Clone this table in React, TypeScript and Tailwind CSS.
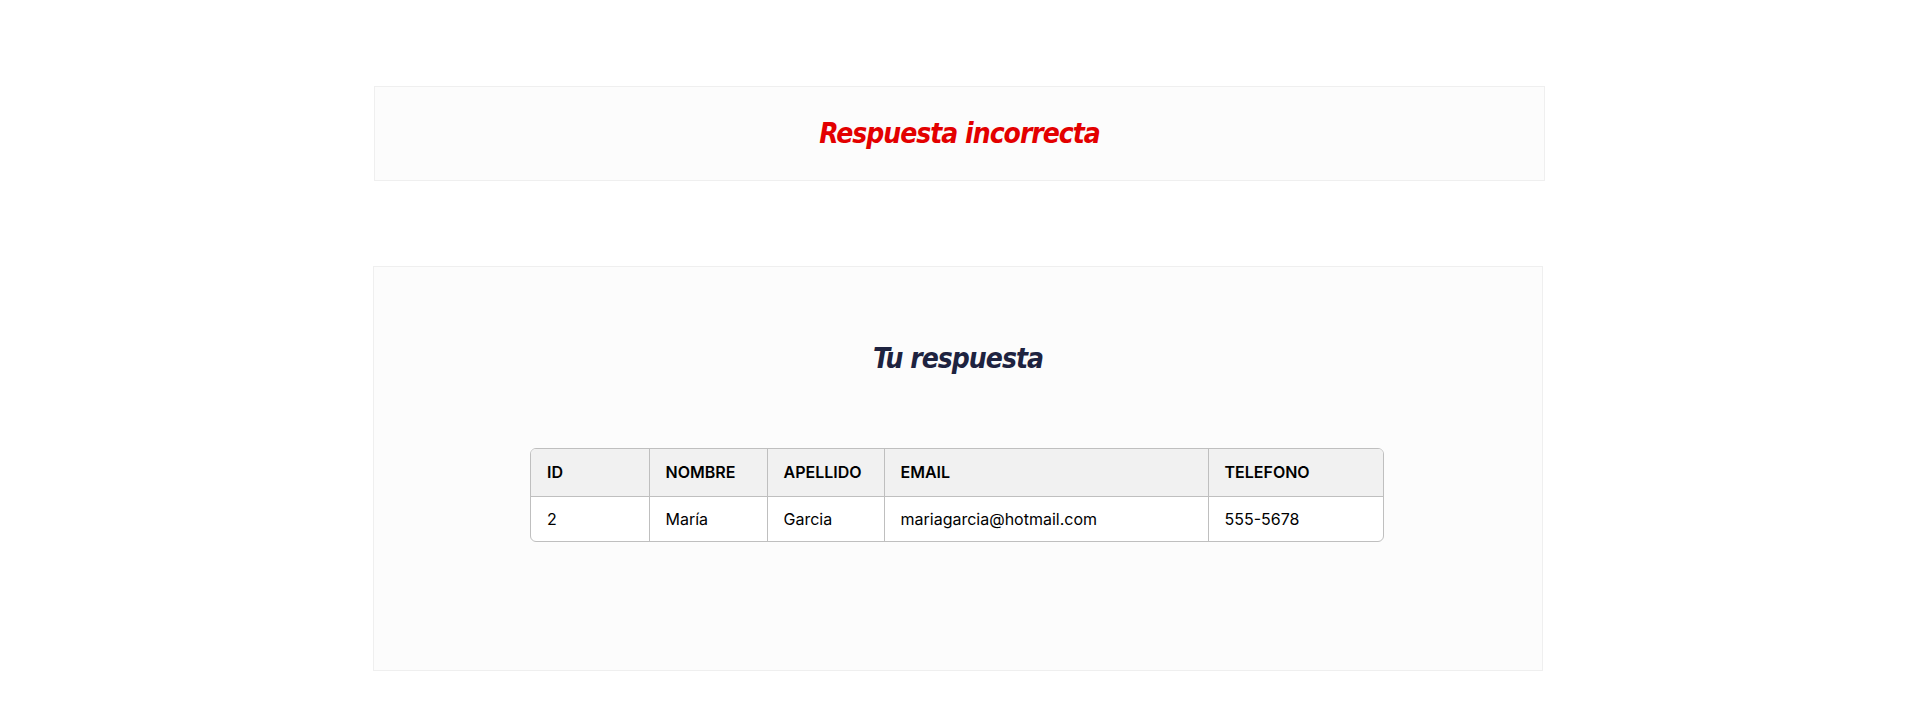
const columns = [
  { key: "id", label: "ID", width: "w-[118px]" },
  { key: "nombre", label: "NOMBRE", width: "w-[118px]" },
  { key: "apellido", label: "APELLIDO", width: "w-[117px]" },
  { key: "email", label: "EMAIL", width: "w-[324px]" },
  { key: "telefono", label: "TELEFONO", width: "" },
] as const

const rows = [
  { id: "2", nombre: "María", apellido: "Garcia", email: "mariagarcia@hotmail.com", telefono: "555-5678" },
]

const headingFont = "font-['DejaVu_Sans_Condensed',sans-serif] italic font-bold text-[28px] leading-9 tracking-[-1px]"

export default function App() {
  return (
    <div className="min-h-[721px] bg-white pt-[86px] font-['Inter',sans-serif]">
      <div className="mx-auto w-[1174px]">
        <div className="ml-px flex h-[95px] w-[1171px] items-center justify-center border border-[#efefef] bg-[#fcfcfc]">
          <h1 className={`${headingFont} text-[#e30000]`}>Respuesta incorrecta</h1>
        </div>

        <div className="mt-[85px] h-[405px] w-[1170px] border border-[#efefef] bg-[#fcfcfc] pt-[74px]">
          <h2 className={`${headingFont} text-center text-[#1e2340]`}>Tu respuesta</h2>

          <div className="mx-auto mt-[71px] w-[854px] -translate-x-px overflow-hidden rounded-md border border-[#bfbfbf] bg-white">
            <table className="w-full table-fixed border-collapse text-left text-base text-black">
              <thead>
                <tr className="bg-[#f1f1f1]">
                  {columns.map((c, i) => (
                    <th
                      key={c.key}
                      className={`${c.width} h-[47px] border-b border-[#bfbfbf] px-4 font-semibold ${i > 0 ? "border-l" : ""}`}
                    >
                      {c.label}
                    </th>
                  ))}
                </tr>
              </thead>
              <tbody>
                {rows.map((r) => (
                  <tr key={r.id}>
                    {columns.map((c, i) => (
                      <td key={c.key} className={`h-[45px] border-[#bfbfbf] px-4 ${i > 0 ? "border-l" : ""}`}>
                        {r[c.key]}
                      </td>
                    ))}
                  </tr>
                ))}
              </tbody>
            </table>
          </div>
        </div>
      </div>
    </div>
  )
}
